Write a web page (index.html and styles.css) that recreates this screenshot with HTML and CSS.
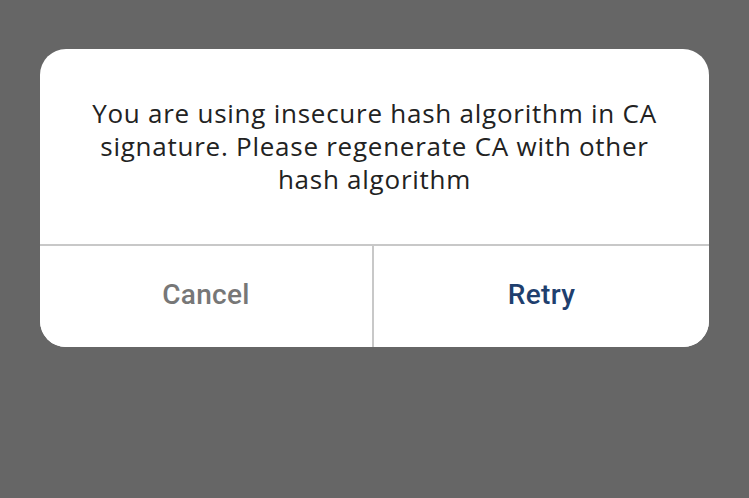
FILE: index.html
```html
<!DOCTYPE html>
<html lang="en">
<head>
    <meta charset="UTF-8">
    <meta name="viewport" content="width=device-width, initial-scale=1.0">
    <title>Alert</title>
    <link rel="stylesheet" href="styles.css">
</head>
<body>
    <div class="dialog">
        <p class="dialog-message">You are using insecure hash algorithm in CA signature. Please regenerate CA with other hash algorithm</p>
        <div class="dialog-actions">
            <button class="btn-cancel">Cancel</button>
            <button class="btn-retry">Retry</button>
        </div>
    </div>
</body>
</html>
```

FILE: styles.css
```css
body {
    margin: 0;
    padding: 49px 40px 0;
    background-color: #666666;
    height: 498px;
    box-sizing: border-box;
}
.dialog {
    width: 669px;
    background: white;
    border-radius: 26px;
    overflow: hidden;
}
.dialog-message {
    margin: 0;
    height: 197px;
    box-sizing: border-box;
    padding: 48px 46px 0;
    font-family: "Open Sans", "Noto Sans", sans-serif;
    font-size: 26px;
    letter-spacing: 0.75px;
    line-height: 33px;
    color: #222222;
    text-align: center;
    border-bottom: 2px solid #c8c8c8;
}
.dialog-actions {
    display: grid;
    grid-template-columns: 334px 1fr;
    height: 101px;
}
.dialog-actions button {
    border: none;
    background: white;
    font-family: Roboto, "Liberation Sans", sans-serif;
    font-weight: 500;
    font-size: 28px;
    letter-spacing: 0.3px;
    padding: 0 0 4px;
    cursor: pointer;
}
.btn-cancel {
    color: #777777;
    border-right: 2px solid #c8c8c8 !important;
}
.btn-retry {
    color: #1f3f6e;
}
```
